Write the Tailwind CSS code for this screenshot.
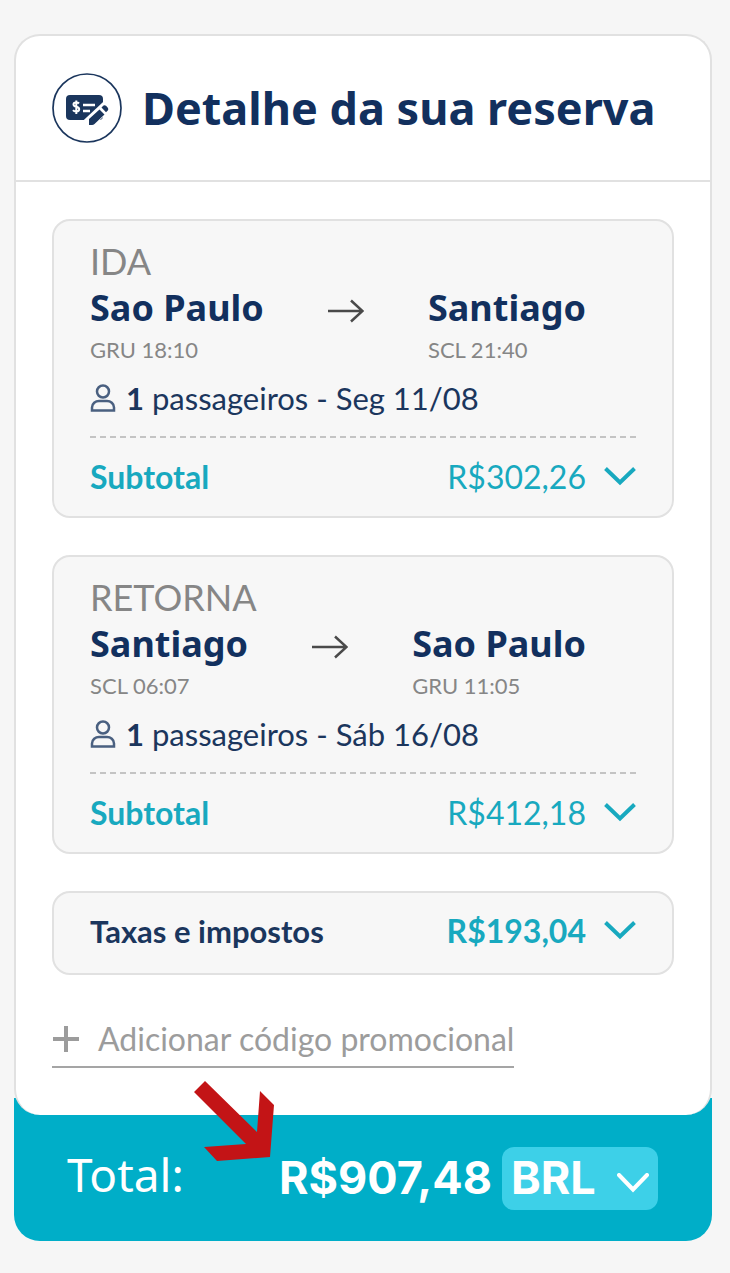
<!DOCTYPE html>
<html lang="pt-BR">

<head>
    <meta charset="UTF-8">
    <title>Detalhe da sua reserva</title>

    <meta content="width=device-width, initial-scale=1.0" name="viewport">

    <script src="https://cdn.jsdelivr.net/npm/@tailwindcss/browser@4"></script>
</head>

<body class="min-h-screen bg-[#f6f6f6] pt-[34px] pb-8 pl-[14px] pr-[18px] font-['Lato',sans-serif] text-[#1b365d]">

    <main>

        <div class="relative z-10 bg-white border-2 border-b-0 border-[#e1e1e1] rounded-[26px]">

            <header class="flex items-center gap-5 h-[146px] px-9 border-b-2 border-[#e1e1e1]">
                <svg class="size-[70px] shrink-0" viewBox="0 0 70 70" fill="none" aria-hidden="true">
                    <circle cx="35" cy="35" r="34" stroke="#1b365d" stroke-width="1.7" />
                    <rect x="14" y="22" width="37" height="25" rx="4" fill="#1b365d" />
                    <path d="M27 30.500c-1-1.200-5.500-1.700-5.500 1 0 3 5.700 1.500 5.700 4.700 0 3-5 2.600-6.200 1M24.300 27.500v13.500" stroke="#fff" stroke-width="2" />
                    <path d="M31 32h12M31 38h7" stroke="#fff" stroke-width="2.500" />
                    <path d="M57 31L35 51.500" stroke="#fff" stroke-width="11" />
                    <path d="M37 52v-6l10.500-9.500 5 5-10 9.500q-1 1-2.500 1zM49.500 34.500l2-2q1.500-.5 2.500.3l1.800 2q.9 1.200.2 2.500l-2 2z" fill="#1b365d" />
                </svg>
                <h1 class="font-['Noto_Sans',sans-serif] font-bold text-[45px] leading-[56px] text-[#12305e] whitespace-nowrap">Detalhe da sua reserva</h1>
            </header>

            <div class="flex flex-col gap-[37px] px-9 pt-[37px] pb-[47px]">

                <!-- IDA -->
                <section class="bg-[#f7f7f7] border-2 border-[#e1e1e1] rounded-[18px] px-9 pt-5">
                    <h2 class="text-[36px] leading-[40px] text-[#868686]">IDA</h2>
                    <div class="flex justify-between pr-[50px]">
                        <div>
                            <h3 class="font-['Noto_Sans',sans-serif] font-bold text-[36px] leading-[54px] text-[#12305e]">Sao Paulo</h3>
                            <p class="text-[22px] leading-[30px] text-[#868686]">GRU 18:10</p>
                        </div>
                        <svg class="w-9 h-6 mt-[18px]" viewBox="0 0 36 24" fill="none" stroke="#4a4a4a" stroke-width="2.500" aria-hidden="true">
                            <path d="M0 12h34M23 1.500L34.500 12 23 22.500" />
                        </svg>
                        <div>
                            <h3 class="font-['Noto_Sans',sans-serif] font-bold text-[36px] leading-[54px] text-[#12305e]">Santiago</h3>
                            <p class="text-[22px] leading-[30px] text-[#868686]">SCL 21:40</p>
                        </div>
                    </div>
                    <p class="flex items-center mt-[13px] text-[31px] leading-[40px]">
                        <svg class="w-[26px] h-7 mr-[10px]" viewBox="0 0 26 28" fill="none" stroke="#4a6080" stroke-width="2.500" aria-hidden="true">
                            <circle cx="13" cy="7.500" r="6" />
                            <path d="M2 26.500v-3c0-4 3.500-6.500 7-6.500h8c3.500 0 7 2.500 7 6.500v3z" />
                        </svg>
                        <span><b>1</b> passageiros - Seg 11/08</span>
                    </p>
                    <div class="mt-[18px] border-t-2 border-dashed border-[#c4c4c4]"></div>
                    <button type="button" class="w-full h-[78px] flex items-center text-[32px] leading-[40px] text-[#18a9bf]">
                        <span class="font-bold">Subtotal</span>
                        <span class="ml-auto">R$302,26</span>
                        <svg class="w-8 h-5 ml-[18px]" viewBox="0 0 32 20" fill="none" stroke="#18a9bf" stroke-width="4" aria-hidden="true">
                            <path d="M1.500 1.500L16 15.500 30.500 1.500" />
                        </svg>
                    </button>
                </section>

                <!-- RETORNA -->
                <section class="bg-[#f7f7f7] border-2 border-[#e1e1e1] rounded-[18px] px-9 pt-5">
                    <h2 class="text-[36px] leading-[40px] text-[#868686]">RETORNA</h2>
                    <div class="flex justify-between pr-[50px]">
                        <div>
                            <h3 class="font-['Noto_Sans',sans-serif] font-bold text-[36px] leading-[54px] text-[#12305e]">Santiago</h3>
                            <p class="text-[22px] leading-[30px] text-[#868686]">SCL 06:07</p>
                        </div>
                        <svg class="w-9 h-6 mt-[18px]" viewBox="0 0 36 24" fill="none" stroke="#4a4a4a" stroke-width="2.500" aria-hidden="true">
                            <path d="M0 12h34M23 1.500L34.500 12 23 22.500" />
                        </svg>
                        <div>
                            <h3 class="font-['Noto_Sans',sans-serif] font-bold text-[36px] leading-[54px] text-[#12305e]">Sao Paulo</h3>
                            <p class="text-[22px] leading-[30px] text-[#868686]">GRU 11:05</p>
                        </div>
                    </div>
                    <p class="flex items-center mt-[13px] text-[31px] leading-[40px]">
                        <svg class="w-[26px] h-7 mr-[10px]" viewBox="0 0 26 28" fill="none" stroke="#4a6080" stroke-width="2.500" aria-hidden="true">
                            <circle cx="13" cy="7.500" r="6" />
                            <path d="M2 26.500v-3c0-4 3.500-6.500 7-6.500h8c3.500 0 7 2.500 7 6.500v3z" />
                        </svg>
                        <span><b>1</b> passageiros - Sáb 16/08</span>
                    </p>
                    <div class="mt-[18px] border-t-2 border-dashed border-[#c4c4c4]"></div>
                    <button type="button" class="w-full h-[78px] flex items-center text-[32px] leading-[40px] text-[#18a9bf]">
                        <span class="font-bold">Subtotal</span>
                        <span class="ml-auto">R$412,18</span>
                        <svg class="w-8 h-5 ml-[18px]" viewBox="0 0 32 20" fill="none" stroke="#18a9bf" stroke-width="4" aria-hidden="true">
                            <path d="M1.500 1.500L16 15.500 30.500 1.500" />
                        </svg>
                    </button>
                </section>

                <!-- TAXAS -->
                <button type="button" class="h-[84px] flex items-center bg-[#f7f7f7] border-2 border-[#e1e1e1] rounded-[18px] px-9 pb-1 font-bold text-[31px] leading-[40px]">
                    <span>Taxas e impostos</span>
                    <span class="ml-auto text-[32px] text-[#18a9bf]">R$193,04</span>
                    <svg class="w-8 h-5 ml-[18px]" viewBox="0 0 32 20" fill="none" stroke="#18a9bf" stroke-width="4" aria-hidden="true">
                        <path d="M1.500 1.500L16 15.500 30.500 1.500" />
                    </svg>
                </button>

                <button type="button" class="self-start h-14 flex items-center border-b-2 border-[#a5a5a5] text-[32px] leading-[40px] text-[#9c9c9c]">
                    <svg class="size-7 mr-[18px]" viewBox="0 0 28 28" stroke="#9c9c9c" stroke-width="4" aria-hidden="true">
                        <path d="M14 1v26M1 14h26" />
                    </svg>
                    <span>Adicionar código promocional</span>
                </button>

            </div>

        </div>

        <!-- TOTAL -->
        <footer class="relative flex items-center h-[143px] -mt-[17px] pt-[17px] pl-[53px] pr-[54px] bg-[#00aec8] rounded-b-[26px] font-['Noto_Sans',sans-serif] text-white">
            <span class="pb-2 text-[46px] leading-[56px]">Total:</span>
            <strong class="ml-auto font-['Inter',sans-serif] font-bold text-[45px] leading-[56px]">R$907,48</strong>
            <div class="relative ml-[10px]">
                <select aria-label="Moeda" class="appearance-none w-[156px] h-[63px] pl-[9px] bg-[#3dd0e8] rounded-xl font-['Inter',sans-serif] font-bold text-[45px] leading-[56px] text-white">
                    <option>BRL</option>
                </select>
                <svg class="absolute right-[9px] top-[26px] w-8 h-5 pointer-events-none" viewBox="0 0 32 20" fill="none" stroke="#fff" stroke-width="4" stroke-linecap="round" aria-hidden="true">
                    <path d="M2 2L16 16.500 30 2" />
                </svg>
            </div>

            <svg class="absolute z-20 left-[180px] -top-[17px] size-20" viewBox="0 0 80 80" fill="#c31416" aria-hidden="true">
                <path d="M11 0L63 51 66 10 80 24 76 76 23 80 10 66 52 63 0 11z" />
            </svg>
        </footer>

    </main>

</body>

</html>
